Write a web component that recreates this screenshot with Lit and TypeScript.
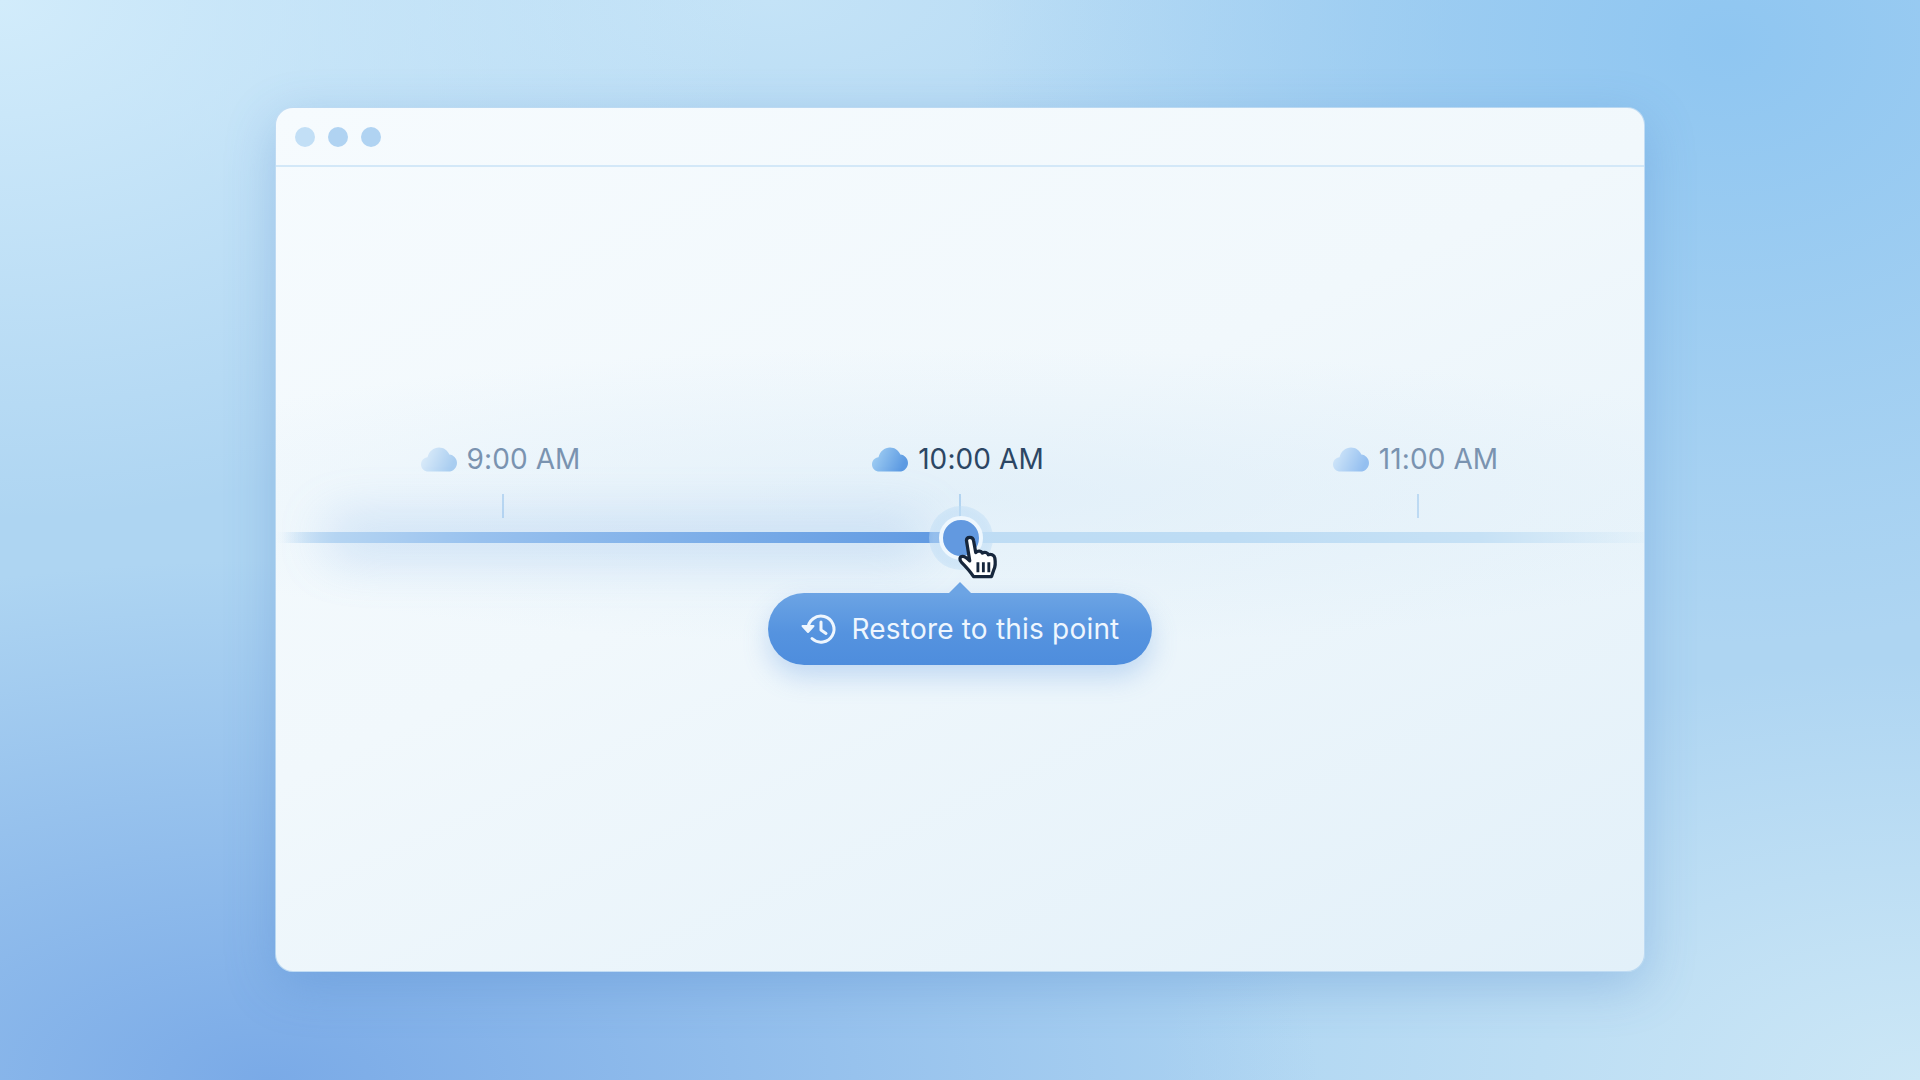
import { LitElement, html, css, svg } from "lit";
import { customElement } from "lit/decorators.js";

const cloud = (id: string, a: string, b: string) => html`<svg class="cloud" viewBox="0 0 36 25" width="36" height="25">
  <defs><linearGradient id=${id} x1="0" y1="0" x2="1" y2="0.3"><stop offset="0" stop-color=${a}/><stop offset="1" stop-color=${b}/></linearGradient></defs>
  ${svg`<path fill="url(#${id})" d="M7.5 24.5C3.3 24.5 0 21.4 0 17.4c0-3.7 2.8-6.7 6.5-7.1C7.8 4.4 12.6 0.5 18 0.5c4.7 0 8.6 2.8 10.3 7 4.3.4 7.7 4 7.7 8.4 0 4.8-3.8 8.6-8.6 8.6z"/>`}
</svg>`;

@customElement("app-root")
export class AppRoot extends LitElement {
  static styles = css`
    :host { display: block; }
    * { box-sizing: border-box; }
    .page {
      width: 1920px; height: 1080px; display: flex; align-items: flex-start; justify-content: center;
      padding-top: 107px; overflow: hidden; font-family: Inter, "Liberation Sans", sans-serif;
      background:
        radial-gradient(760px 520px at 0% 0%, #d2ecfb 0%, rgba(210,236,251,0) 100%),
        radial-gradient(760px 600px at 90% 4%, #8fc6f1 0%, rgba(143,198,241,0) 100%),
        radial-gradient(1050px 520px at 14% 100%, #7aaae7 0%, rgba(122,170,231,0) 100%),
        radial-gradient(760px 420px at 100% 100%, #cce7f6 0%, rgba(204,231,246,0) 100%),
        radial-gradient(700px 300px at 40% 0%, #c4e3f7 0%, rgba(196,227,247,0) 100%),
        #aed5f2;
    }
    .window {
      width: 1370px; height: 865px; border-radius: 18px; display: flex; flex-direction: column; overflow: hidden;
      background: linear-gradient(155deg, #f6fbfe 0%, #f1f8fc 45%, #e2f0f9 100%);
      border: 1px solid rgba(150,195,235,.55);
    }
    .shadow { border-radius: 18px; box-shadow: 0 14px 50px rgba(70,125,200,.3); }
    .bar { height: 59px; flex: none; display: flex; align-items: center; gap: 13px; padding-left: 19px; border-bottom: 2px solid #d3e8f8; }
    .dot { width: 20px; height: 20px; border-radius: 50%; background: #c2dff6; }
    .dot.b { background: #b0d3f2; }
    .main { flex: 1; display: flex; flex-direction: column; padding-top: 274px; position: relative;
      background: radial-gradient(900px 150px at 685px 330px, rgba(205,228,245,.4), rgba(205,228,245,0) 100%); }
    .labels { display: grid; grid-template-columns: repeat(3, 457.5px); justify-content: center; }
    .col { display: flex; flex-direction: column; align-items: center; }
    .label { display: flex; align-items: center; gap: 10px; height: 36px; font-size: 28px; letter-spacing: .1px; color: #7a93b0; margin-left: -4px; }
    .label.on { color: #2c4664; }
    .tick { width: 2px; height: 24px; margin-top: 17px; background: #bddaf3; }
    .tick.on { background: #b3d4f0; }
    .trackwrap { position: relative; height: 11px; margin-top: 14px; }
    .glow { position: absolute; left: 50px; width: 600px; top: -14px; height: 39px; border-radius: 30px; background: rgba(100,158,228,.26); filter: blur(24px); }
    .track { position: absolute; inset: 0; background: linear-gradient(90deg, rgba(190,220,245,0) 0%, #c2def4 6%, #bddcf4 70%, #c6e1f5 88%, rgba(205,230,246,.15) 100%); }
    .fill { position: absolute; left: 0; top: 0; bottom: 0; width: 685px; background: linear-gradient(90deg, rgba(140,185,235,0) 1%, #b4d4f2 9%, #98c1ee 30%, #6aa1e4 85%, #5f98e1 100%); }
    .halo { position: absolute; left: 685px; top: 5.5px; width: 64px; height: 64px; margin: -32px; border-radius: 50%; background: radial-gradient(circle, rgba(190,220,245,.55) 60%, rgba(195,224,246,.3) 90%, rgba(195,224,246,0) 100%); }
    .knob { position: absolute; left: 685px; top: 5.5px; width: 44px; height: 44px; margin: -22px; border-radius: 50%; background: #6299e0; border: 4px solid #eef7fe; }
    .hand { position: absolute; left: 680px; top: 2px; }
    .popwrap { display: flex; justify-content: center; margin-top: 50px; }
    .pop { position: relative; width: 384px; height: 72px; border-radius: 36px; display: flex; align-items: center; justify-content: center; gap: 13px;
      background: linear-gradient(180deg, #6ca4e4 0%, #5593df 55%, #4e8ddd 100%); color: #eef6fe; font-size: 28px; letter-spacing: .2px;
      box-shadow: 0 12px 26px rgba(90,150,225,.3); }
    .pop::before { content: ""; position: absolute; left: 50%; top: -11px; margin-left: -12px; width: 0; height: 0;
      border-left: 12px solid transparent; border-right: 12px solid transparent; border-bottom: 12px solid #6ca4e4; }
  `;

  render() {
    return html`<div class="page"><div class="shadow"><div class="window">
      <div class="bar"><span class="dot"></span><span class="dot b"></span><span class="dot b"></span></div>
      <div class="main">
        <div class="labels">
          <div class="col"><div class="label">${cloud("c1", "#e2f0fb", "#a9cdf0")}9:00 AM</div><div class="tick"></div></div>
          <div class="col"><div class="label on">${cloud("c2", "#a8d4f5", "#5c9ae2")}10:00 AM</div><div class="tick on"></div></div>
          <div class="col"><div class="label">${cloud("c3", "#d8ebfa", "#94bff0")}11:00 AM</div><div class="tick"></div></div>
        </div>
        <div class="trackwrap">
          <div class="glow"></div>
          <div class="track"></div>
          <div class="fill"></div>
          <div class="halo"></div>
          <div class="knob"></div>
          <svg class="hand" width="46" height="48" viewBox="0 0 42 44">
            <path fill="#fff" stroke="#16263c" stroke-width="3" stroke-linejoin="round" d="M9.5 6c0-4 6-4 6.5 0l2 11c2-2 5-1.5 6 .5 2-1.5 5-.5 5.5 1.5 2-1 5.5 0 6 3 .7 4 .5 8-1 11l-2 6H16c-2-3-7-9-11-13-2-2-2-5 .5-5.5 2-.5 4 1 7 4z"/>
            <path stroke="#16263c" stroke-width="2.6" fill="none" d="M20 26v9M25 26v9M30 26v9"/>
          </svg>
        </div>
        <div class="popwrap"><div class="pop">
          <svg width="38" height="34" viewBox="0 0 38 34" fill="none" stroke="#eef6fe" stroke-width="3" stroke-linecap="round" stroke-linejoin="round">
            <path d="M7 17A13 13 0 1 1 11 26.5"/>
            <path d="M1.5 14l5.5 6 5.5-6z" fill="#eef6fe" stroke-width="2"/>
            <path d="M20 10v8l5 3.5"/>
          </svg>
          <span>Restore to this point</span>
        </div></div>
      </div>
    </div></div></div>`;
  }
}
